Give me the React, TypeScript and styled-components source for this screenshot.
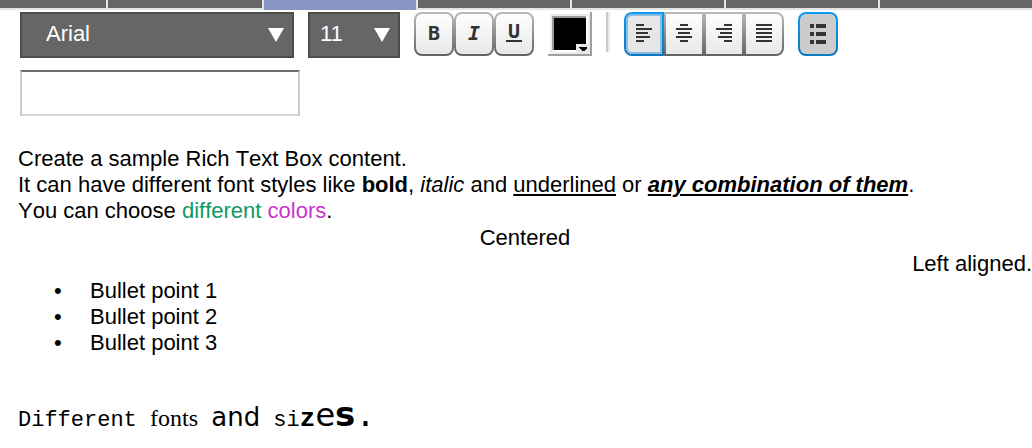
import React from "react";
import styled, { createGlobalStyle } from "styled-components";

const GlobalStyle = createGlobalStyle`
  *, *::before, *::after { box-sizing: border-box; }
  body {
    margin: 0;
    background: #fff;
    color: #000;
    font-family: "Liberation Sans", Arial, sans-serif;
    font-size: 22px;
  }
`;

const TabStrip = styled.div`
  display: flex;
  height: 10px;
  background: #e4e4e4;
`;

const Tab = styled.div<{ $share: number; $active?: boolean }>`
  flex: ${(p) => p.$share} 1 0;
  height: ${(p) => (p.$active ? 10 : 8)}px;
  background: ${(p) => (p.$active ? "#8796c5" : "#666")};
  border-right: 2px solid #e4e4e4;
  &:last-child { border-right: 0; }
`;

const Toolbar = styled.div`
  display: flex;
  align-items: flex-start;
  gap: 14px;
  padding: 2px 20px 0;
`;

const SelectBox = styled.div<{ $width: number }>`
  position: relative;
  width: ${(p) => p.$width}px;
  height: 46px;
`;

const Select = styled.select<{ $indent: number }>`
  appearance: none;
  width: 100%;
  height: 100%;
  border: 2px solid #4d4d4d;
  border-radius: 0;
  background: #666;
  color: #fff;
  font: inherit;
  padding: 0 30px 4px ${(p) => p.$indent}px;
`;

const Arrow = styled.svg`
  position: absolute;
  right: 10px;
  top: 16px;
  pointer-events: none;
`;

const ButtonGroup = styled.div`
  display: flex;
`;

const ToolButton = styled.button`
  display: flex;
  align-items: center;
  justify-content: center;
  width: 40px;
  height: 44px;
  padding: 0 0 2px;
  border: 2px solid transparent;
  border-radius: 8px;
  background:
    linear-gradient(#fff, #e8e8e8) padding-box,
    linear-gradient(#b8bcbe, #606466) border-box;
  color: #333;
`;

const SegmentButton = styled(ToolButton)`
  border-radius: 0;
  &:first-child { border-radius: 8px 0 0 8px; }
  &:last-child { border-radius: 0 8px 8px 0; }
  &[aria-pressed="true"] {
    background:
      linear-gradient(#e6e6e6, #e6e6e6) padding-box,
      linear-gradient(#0d9bf5, #0c78bd) border-box;
    box-shadow: inset 0 0 0 2px #8abbe2;
  }
`;

const ListButton = styled(ToolButton)`
  padding: 0;
  background:
    linear-gradient(#ccc, #ccc) padding-box,
    linear-gradient(#0d9bf5, #0c78bd) border-box;
`;

const Letter = styled.span`
  font: bold 20px/14px "DejaVu Sans Mono", monospace;
`;

const ItalicLetter = styled(Letter)`
  font-style: italic;
`;

const UnderlinedLetter = styled(Letter)`
  width: 16px;
  padding-bottom: 2px;
  border-bottom: 2px solid #333;
`;

const ColorButton = styled.button`
  width: 44px;
  height: 44px;
  padding: 0;
  border: 0;
  background: none;
`;

const Separator = styled.div`
  width: 4px;
  height: 40px;
  border-left: 2px solid #c4cccc;
  border-right: 2px solid #e8eaea;
`;

const TextField = styled.input`
  display: block;
  width: 280px;
  height: 46px;
  margin: 12px 20px 0;
  border: 2px solid #ccc;
  border-top-color: #6c6c6c;
  border-bottom-color: #d6d6d6;
  background: #fff;
  font: inherit;
`;

const Content = styled.main`
  padding: 30px 0 0 18px;
  line-height: 26px;
  font-kerning: none;
`;

const Paragraph = styled.p`
  margin: 0;
`;

const Aligned = styled.div`
  margin: 1px 0;
`;

const Centered = styled(Paragraph)`
  text-align: center;
`;

const RightAligned = styled(Paragraph)`
  text-align: right;
`;

const Colored = styled.span<{ $color: string }>`
  color: ${(p) => p.$color};
`;

const Bullets = styled.ul`
  margin: 0;
  padding: 0 0 0 36px;
  list-style: none;
`;

const Bullet = styled.li`
  display: flex;
  &::before {
    content: "•";
    width: 36px;
  }
`;

const Samples = styled.p`
  margin: 41px 0 0;
  line-height: 34px;
  white-space: pre;
`;

const Sample = styled.span<{ $font: string; $size: number; $bold?: boolean }>`
  font-family: ${(p) => p.$font};
  font-size: ${(p) => p.$size}px;
  font-weight: ${(p) => (p.$bold ? "bold" : "normal")};
`;

const MONO = '"Liberation Mono", "Courier New", monospace';
const SERIF = '"Liberation Serif", "Times New Roman", serif';
const SANS = '"DejaVu Sans", Verdana, sans-serif';

const alignments: { label: string; bars: [number, number][] }[] = [
  { label: "Align left", bars: [[0, 8], [0, 16], [0, 12], [0, 14], [0, 8]] },
  { label: "Center", bars: [[4, 8], [0, 16], [2, 12], [0, 16], [4, 8]] },
  { label: "Align right", bars: [[8, 8], [0, 16], [4, 12], [2, 14], [8, 8]] },
  { label: "Justify", bars: [[0, 16], [0, 16], [0, 16], [0, 16], [0, 16]] },
];

function DropDown(props: { label: string; width: number; indent: number; options: string[] }) {
  return (
    <SelectBox $width={props.width}>
      <Select $indent={props.indent} aria-label={props.label}>
        {props.options.map((o) => (
          <option key={o}>{o}</option>
        ))}
      </Select>
      <Arrow width="16" height="14" viewBox="0 0 16 14" aria-hidden="true">
        <path d="M0 0H16L8 14Z" fill="#fff" />
      </Arrow>
    </SelectBox>
  );
}

export default function App() {
  return (
    <>
      <GlobalStyle />
      <TabStrip>
        <Tab $share={106} />
        <Tab $share={154} />
        <Tab $share={152} $active />
        <Tab $share={152} />
        <Tab $share={152} />
        <Tab $share={152} />
        <Tab $share={152} />
      </TabStrip>
      <Toolbar role="toolbar" aria-label="Formatting">
        <DropDown label="Font" width={274} indent={24} options={["Arial"]} />
        <DropDown label="Font size" width={92} indent={10} options={["11"]} />
        <ButtonGroup>
          <ToolButton aria-label="Bold"><Letter>B</Letter></ToolButton>
          <ToolButton aria-label="Italic"><ItalicLetter>I</ItalicLetter></ToolButton>
          <ToolButton aria-label="Underline"><UnderlinedLetter>U</UnderlinedLetter></ToolButton>
        </ButtonGroup>
        <ColorButton aria-label="Text color">
          <svg width="44" height="44" viewBox="0 0 44 44" shapeRendering="crispEdges" display="block">
            <path d="M2 2H42V42H2Z" fill="#ececec" />
            <path d="M42 0H44V44H0V42H42Z" fill="#a0a0a4" />
            <path d="M4 4H40V40H4Z" fill="#fff" />
            <path d="M4 4H38V6H6V38H4Z" fill="#9a9c9c" />
            <path d="M6 6H38V38H6Z" fill="#000" />
            <path d="M28 32H42V42H28Z" fill="#e8e8e8" />
            <path d="M31 35H39V36L36 39H34L31 36Z" fill="#000" />
          </svg>
        </ColorButton>
        <Separator />
        <ButtonGroup>
          {alignments.map(({ label, bars }, i) => (
            <SegmentButton key={label} aria-label={label} aria-pressed={i === 0}>
              <svg width="16" height="18" viewBox="0 0 16 18" fill="#333">
                {bars.map(([x, w], row) => (
                  <rect key={row} x={x} y={row * 4} width={w} height="2" />
                ))}
              </svg>
            </SegmentButton>
          ))}
        </ButtonGroup>
        <ListButton aria-label="Bulleted list" aria-pressed>
          <svg width="16" height="20" viewBox="0 0 16 20" fill="#333">
            <path d="M0 0H4V4H0ZM6 0H16V4H6ZM0 8H4V12H0ZM6 8H16V12H6ZM0 16H4V20H0ZM6 16H16V20H6Z" />
          </svg>
        </ListButton>
      </Toolbar>
      <TextField type="text" aria-label="Value" />
      <Content>
        <Paragraph>Create a sample Rich Text Box content.</Paragraph>
        <Paragraph>
          It can have different font styles like <b>bold</b>, <i>italic</i> and <u>underlined</u> or{" "}
          <b><i><u>any combination of them</u></i></b>.
        </Paragraph>
        <Paragraph>
          You can choose <Colored $color="#109a66">different</Colored>{" "}
          <Colored $color="#cc33cc">colors</Colored>.
        </Paragraph>
        <Aligned>
          <Centered>Centered</Centered>
          <RightAligned>Left aligned.</RightAligned>
        </Aligned>
        <Bullets>
          <Bullet>Bullet point 1</Bullet>
          <Bullet>Bullet point 2</Bullet>
          <Bullet>Bullet point 3</Bullet>
        </Bullets>
        <Samples>
          <Sample $font={MONO} $size={22}>Different </Sample>
          <Sample $font={SERIF} $size={24}>fonts</Sample>
          <Sample $font={MONO} $size={22}> </Sample>
          <Sample $font={SANS} $size={26}>and</Sample>
          <Sample $font={MONO} $size={22}> si</Sample>
          <Sample $font={MONO} $size={26} $bold>z</Sample>
          <Sample $font={SANS} $size={32}>e</Sample>
          <Sample $font={SANS} $size={34} $bold>s</Sample>
          <Sample $font={MONO} $size={34}>.</Sample>
        </Samples>
      </Content>
    </>
  );
}
